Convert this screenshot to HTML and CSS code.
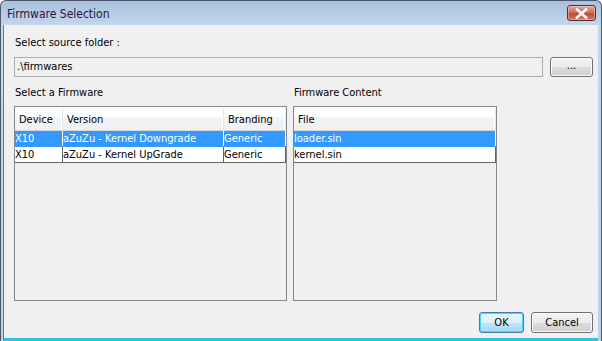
FILE: index.html
```html
<!DOCTYPE html>
<html lang="en">
<head>
    <meta charset="UTF-8">
    <title>Firmware Selection</title>
    <link rel="stylesheet" href="styles.css">
</head>
<body>

    <div class="window">
        <div class="titlebar">
            <span class="title">Firmware Selection</span>
            <button class="close" title="Close">
                <svg width="13" height="11" viewBox="0 0 13 11">
                    <path d="M2 1.5 L11 9.5 M11 1.5 L2 9.5" stroke="#ffffff" stroke-width="2.6" stroke-linecap="square"/>
                </svg>
            </button>
        </div>

        <div class="client">
            <div class="label">Select source folder :</div>
            <div class="folder-row">
                <div class="field">.\firmwares</div>
                <button class="btn browse">...</button>
            </div>

            <div class="panels">
                <div class="panel left">
                    <div class="label">Select a Firmware</div>
                    <div class="table">
                        <div class="row head">
                            <div class="cell c-device">Device</div>
                            <div class="cell c-version">Version</div>
                            <div class="cell c-brand">Branding</div>
                        </div>
                        <div class="row selected">
                            <div class="cell c-device">X10</div>
                            <div class="cell c-version">aZuZu - Kernel Downgrade</div>
                            <div class="cell c-brand">Generic</div>
                        </div>
                        <div class="row">
                            <div class="cell c-device">X10</div>
                            <div class="cell c-version">aZuZu - Kernel UpGrade</div>
                            <div class="cell c-brand">Generic</div>
                        </div>
                    </div>
                </div>
                <div class="panel right">
                    <div class="label">Firmware Content</div>
                    <div class="table">
                        <div class="row head">
                            <div class="cell c-file">File</div>
                        </div>
                        <div class="row selected">
                            <div class="cell c-file">loader.sin</div>
                        </div>
                        <div class="row">
                            <div class="cell c-file">kernel.sin</div>
                        </div>
                    </div>
                </div>
            </div>

            <div class="actions">
                <button class="btn ok">OK</button>
                <button class="btn cancel">Cancel</button>
            </div>
        </div>
    </div>

</body>
</html>
```

FILE: styles.css
```css
* {
    margin: 0;
    padding: 0;
    box-sizing: border-box;
}

body {
    width: 602px;
    height: 341px;
    overflow: hidden;
    background: #ffffff;
    font-family: 'DejaVu Sans Condensed', 'Liberation Sans', sans-serif;
    font-size: 11px;
    color: #000;
}

.window {
    width: 602px;
    height: 341px;
    display: flex;
    flex-direction: column;
    border: 1px solid #4d5866;
    border-bottom: none;
    border-radius: 6px 6px 0 0;
    background: linear-gradient(#a9c1dd, #c3d7ed 25px, #bcd2ea);
    overflow: hidden;
}

.titlebar {
    height: 24px;
    display: flex;
    align-items: center;
    justify-content: space-between;
    padding: 0 5px 0 6px;
}

.title {
    font-size: 12px;
    color: #2a1438;
    padding-top: 1px;
}

.close {
    width: 29px;
    height: 16px;
    border: 1px solid #5e2a27;
    border-radius: 3px;
    background: linear-gradient(#e5a497, #d2705f 45%, #bf4a36 55%, #d0796a);
    display: flex;
    align-items: center;
    justify-content: center;
    box-shadow: inset 0 0 0 1px rgba(255, 255, 255, 0.35);
}

.client {
    flex: 1;
    margin: 0 3px 0 2px;
    border-left: 1px solid #3f7fcf;
    border-bottom: 3px solid #2bc4e6;
    background: #f0f0f0;
    padding: 11px 5px 0 10px;
    display: flex;
    flex-direction: column;
}

.label {
    height: 14px;
    line-height: 14px;
    margin-left: 1px;
}

.folder-row {
    display: flex;
    gap: 7px;
    margin-top: 7px;
    height: 20px;
}

.field {
    flex: 1;
    border: 1px solid #acacac;
    background: #f0f0f0;
    line-height: 18px;
    padding-left: 2px;
}

.btn {
    font-family: 'DejaVu Sans Condensed', 'Liberation Sans', sans-serif;
    font-size: 11px;
    color: #000;
    border: 1px solid #707070;
    border-radius: 3px;
    background: linear-gradient(#f2f2f2, #ebebeb 50%, #dddddd 50%, #cfcfcf);
    box-shadow: inset 0 0 0 1px #fcfcfc;
}

.browse {
    width: 43px;
    line-height: 12px;
    padding-bottom: 3px;
}

.panels {
    display: flex;
    gap: 6px;
    margin-top: 9px;
}

.panel .label {
    margin-bottom: 6px;
}

.panel.left {
    width: 273px;
}

.panel.right {
    width: 204px;
}

.table {
    height: 195px;
    border: 1px solid #828790;
    background: #f0f0f0;
}

.row {
    display: flex;
    height: 16px;
    line-height: 15px;
    background: #ffffff;
    border-bottom: 1px solid #646464;
}

.row .cell {
    border-right: 1px solid #646464;
    white-space: nowrap;
    overflow: hidden;
}

.row.head {
    height: 24px;
    line-height: 24px;
    background: linear-gradient(#ffffff, #ffffff 40%, #f3f4f6 40%, #eff0f2);
    border-bottom: 1px solid #d5d5d5;
    border-top: 1px solid #ffffff;
}

.row.head .cell {
    padding-left: 4px;
    border-right: 1px solid #e3e5e8;
    box-shadow: inset -1px 0 0 #ffffff;
}

.row.selected {
    background: #3399ff;
    color: #ffffff;
    border-bottom-color: #3399ff;
}

.row.selected .cell {
    border-right-color: #ffffff;
}

.c-device {
    width: 48px;
}

.c-version {
    width: 161px;
}

.c-brand {
    width: 62px;
}

.c-file {
    flex: 1;
}

.actions {
    display: flex;
    justify-content: flex-end;
    gap: 7px;
    margin-top: 11px;
}

.ok,
.cancel {
    height: 21px;
}

.ok {
    width: 45px;
    border-color: #3c7fb1;
    background: linear-gradient(#eaf6fd, #d9f0fc 50%, #bee6fd 50%, #a7d9f5);
    box-shadow: inset 0 0 0 1px #48d8fb;
}

.cancel {
    width: 62px;
}
```
